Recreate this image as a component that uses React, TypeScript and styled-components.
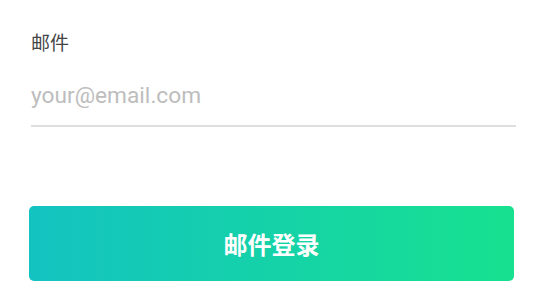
import React from 'react'
import styled, { createGlobalStyle } from 'styled-components'

const GlobalStyle = createGlobalStyle`
  html, body {
    margin: 0;
    padding: 0;
    background: #fff;
  }
  body {
    font-family: Roboto, 'Noto Sans CJK SC', sans-serif;
  }
`

const Form = styled.form`
  width: 546px;
  box-sizing: border-box;
  padding: 29px 30px 0 30px;
  display: flex;
  flex-direction: column;
`

const Field = styled.div`
  display: flex;
  flex-direction: column;
  padding-left: 1px;
`

const Label = styled.label`
  font-family: 'Noto Sans CJK SC', sans-serif;
  font-size: 19px;
  line-height: 26px;
  color: #444;
`

const Input = styled.input`
  margin-top: 18px;
  height: 54px;
  box-sizing: border-box;
  padding: 0 0 7px 0;
  border: none;
  border-bottom: 2px solid #dedede;
  outline: none;
  background: transparent;
  font-family: Roboto, sans-serif;
  font-size: 22.7px;
  color: #333;

  &::placeholder {
    color: #bdbdbd;
  }
`

const SubmitButton = styled.button`
  margin-top: 79px;
  width: 485px;
  margin-left: -1px;
  height: 75px;
  border: none;
  border-radius: 5px;
  background: linear-gradient(to right, #13c3c1, #17e18f);
  color: #fff;
  font-family: 'Noto Sans CJK SC', sans-serif;
  font-size: 24px;
  font-weight: 700;
  cursor: pointer;
`

const App: React.FC = () => {
  return (
    <>
      <GlobalStyle />
      <Form onSubmit={e => e.preventDefault()}>
        <Field>
          <Label htmlFor="email">邮件</Label>
          <Input id="email" type="email" placeholder="your@email.com" />
        </Field>
        <SubmitButton type="submit">邮件登录</SubmitButton>
      </Form>
    </>
  )
}

export default App
